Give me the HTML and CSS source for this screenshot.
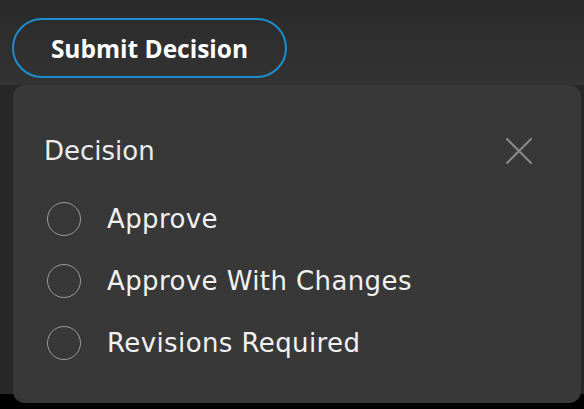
FILE: index.html
```html
<!DOCTYPE html>
<html>
<head>
<meta charset="utf-8">
<link rel="stylesheet" href="styles.css">
</head>
<body>
<div class="page">
  <header class="topbar">
    <button class="submit-btn">Submit Decision</button>
  </header>
  <div class="content"></div>
  <div class="popover">
    <div class="popover-head">
      <span class="popover-title">Decision</span>
      <svg class="close-icon" width="26" height="26" viewBox="0 0 26 26" aria-hidden="true">
        <path d="M1 1 L25 25 M25 1 L1 25" stroke="#8a8a8a" stroke-width="2" stroke-linecap="round" fill="none"/>
      </svg>
    </div>
    <ul class="options">
      <li class="option"><span class="radio"></span><span class="option-label">Approve</span></li>
      <li class="option"><span class="radio"></span><span class="option-label">Approve With Changes</span></li>
      <li class="option"><span class="radio"></span><span class="option-label">Revisions Required</span></li>
    </ul>
  </div>
</div>
</body>
</html>
```

FILE: styles.css
```css
* { box-sizing: border-box; }
html, body { margin: 0; padding: 0; }
body {
  background: #000;
  width: 584px;
  height: 409px;
  overflow: hidden;
  font-family: "DejaVu Sans", "Noto Sans", sans-serif;
}
.page {
  position: relative;
  width: 584px;
  height: 409px;
}
.topbar {
  height: 85px;
  background: linear-gradient(180deg, #2a2a2a 0%, #333333 100%);
  padding: 18px 0 0 12px;
}
.submit-btn {
  width: 275px;
  height: 60px;
  border: 2px solid #1a8ed0;
  border-radius: 30px;
  background: transparent;
  color: #ffffff;
  font-family: "Open Sans", sans-serif;
  font-weight: 700;
  font-size: 24.5px;
  padding: 0;
  display: flex;
  align-items: center;
  justify-content: center;
}
.content {
  height: 309px;
  background: #272727;
}
.popover {
  position: absolute;
  top: 85px;
  left: 13px;
  width: 568px;
  height: 318px;
  background: #383838;
  border-radius: 12px;
  padding: 50px 49px 0 31px;
}
.popover-head {
  display: flex;
  align-items: center;
  justify-content: space-between;
  height: 32px;
}
.popover-title {
  color: #ececec;
  font-size: 26px;
  line-height: 1;
}
.close-icon { display: block; }
.options {
  list-style: none;
  margin: 21px 0 0 3px;
  padding: 0;
}
.option {
  display: flex;
  align-items: center;
  height: 62px;
  gap: 26px;
}
.radio {
  width: 34px;
  height: 34px;
  border: 1.6px solid #9c9c9c;
  border-radius: 50%;
  flex: none;
}
.option-label {
  color: #f2f2f2;
  font-size: 26px;
  line-height: 1;
  letter-spacing: 0.4px;
}
```
